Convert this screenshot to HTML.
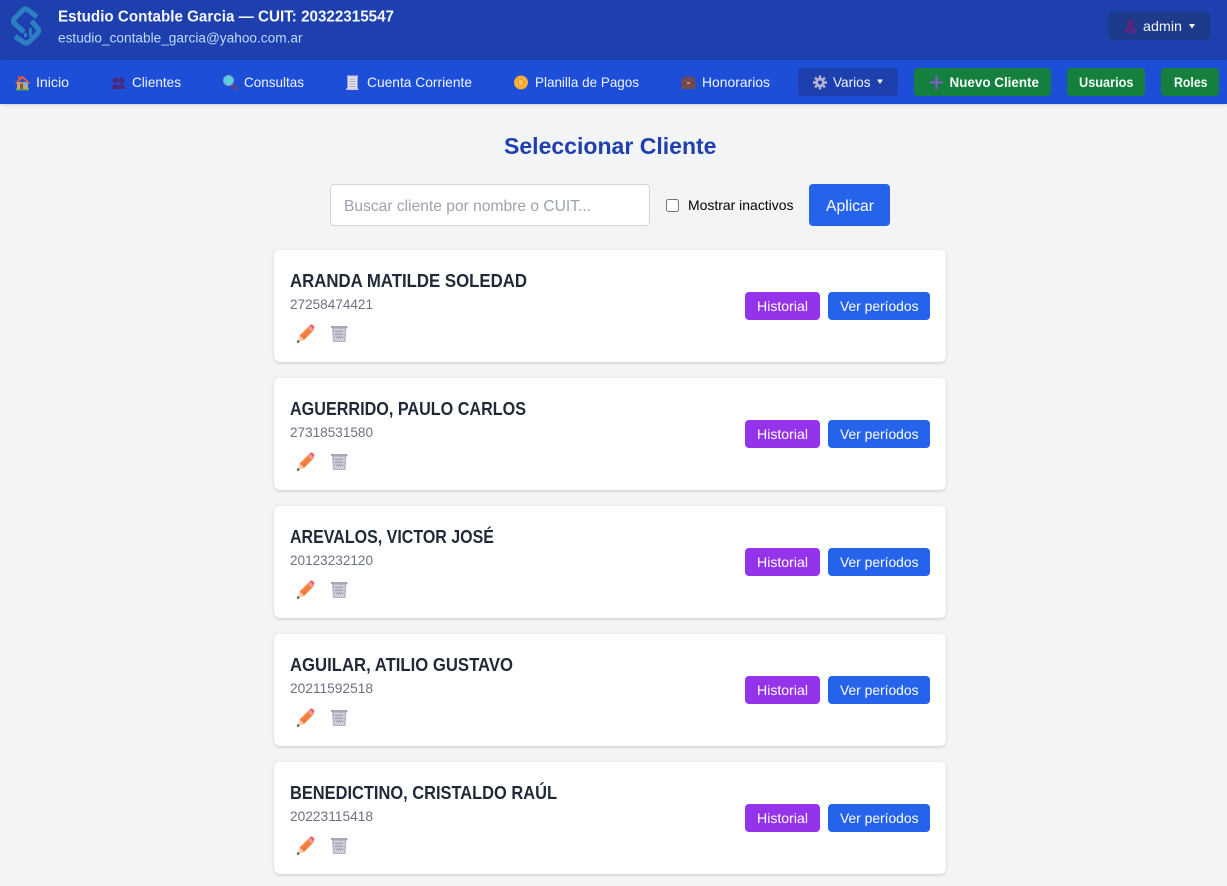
<!DOCTYPE html>
<html lang="es">
<head>
<meta charset="utf-8">
<title>Seleccionar Cliente</title>
<style>
html,body{margin:0;padding:0;background:#f3f4f6;}
body{position:relative;width:1227px;height:886px;overflow:hidden;font-family:"Liberation Sans",sans-serif;}
.b{position:absolute;box-sizing:border-box;}
.top{left:0;top:0;width:1227px;height:60px;background:#1e40af;}
.nav{left:0;top:60px;width:1227px;height:44px;background:#1d4ed8;box-shadow:0 1px 3px rgba(0,0,0,.15);}
.r{border-radius:4px;}
.g{background:#15803d;top:68px;height:28px;}
.card{left:274px;width:672px;height:112px;background:#fff;border-radius:6px;box-shadow:0 1px 3px rgba(0,0,0,.12),0 1px 2px rgba(0,0,0,.06);}
.h{left:745px;width:75px;height:28px;background:#9333ea;border-radius:4px;}
.v{left:828px;width:102px;height:28px;background:#2563eb;border-radius:4px;}
input[type=checkbox]{position:absolute;left:666px;top:199px;width:13px;height:13px;margin:0;}
svg.o{position:absolute;left:0;top:0;}
text{font-family:"Liberation Sans",sans-serif;}
.n{font-size:14px;fill:#eff4ff;}
.nm{font-size:18px;font-weight:700;fill:#1f2937;}
.c{font-size:14px;fill:#6b7280;}
.bt{font-size:14px;fill:#fff;}
</style>
</head>
<body>
<div class="b top"></div>
<div class="b nav"></div>
<div class="b r" style="left:1108px;top:12px;width:102px;height:28px;background:#1e3a8a;"></div>
<div class="b r" style="left:798px;top:68px;width:100px;height:28px;background:#1e40af;"></div>
<div class="b r g" style="left:914px;width:137px;"></div>
<div class="b r g" style="left:1067px;width:78px;"></div>
<div class="b r g" style="left:1161px;width:58px;"></div>

<div class="b" style="left:330px;top:184px;width:320px;height:42px;background:#fff;border:1px solid #d1d5db;border-radius:4px;"></div>
<div class="b r" style="left:809px;top:184px;width:81px;height:42px;background:#2563eb;"></div>
<input type="checkbox">

<div class="b card" style="top:250px"></div><div class="b h" style="top:292px"></div><div class="b v" style="top:292px"></div>
<div class="b card" style="top:378px"></div><div class="b h" style="top:420px"></div><div class="b v" style="top:420px"></div>
<div class="b card" style="top:506px"></div><div class="b h" style="top:548px"></div><div class="b v" style="top:548px"></div>
<div class="b card" style="top:634px"></div><div class="b h" style="top:676px"></div><div class="b v" style="top:676px"></div>
<div class="b card" style="top:762px"></div><div class="b h" style="top:804px"></div><div class="b v" style="top:804px"></div>

<svg class="o" width="1227" height="886" viewBox="0 0 1227 886" xmlns="http://www.w3.org/2000/svg">
<defs>
<g id="pencil">
<path d="M299.500 335.500l9.500-9.500 4.500 4.500-9.500 9.500z" fill="#f47b3a"/>
<path d="M301.500 333.500l9-9 1 1-9 9z" fill="#f89a5c"/>
<path d="M297 343l2.500-7.500 4.500 4.500z" fill="#f2cfa4"/>
<path d="M296.800 343l1-3 2 2z" fill="#3a2f33"/>
<path d="M307.500 327.500l2.500-2 4 4-2 2.500z" fill="#ee9c9c"/>
<path d="M309.800 325.500l.8-.7q1-.7 1.800 0l1.700 1.700q.7.800 0 1.800l-.7.900z" fill="#ef5a5a"/>
</g>
<g id="trash">
<path d="M331 326h16.500v2H331z" fill="#a6a6b6"/>
<path d="M332 328h14.500l-1 14h-12.500z" fill="#b6b6c4"/>
<path d="M333.800 329h11l-.8 11.800h-9.400z" fill="#d2d2dc"/>
<path d="M335 330.500l1 1.500 1-1.500 1 1.500 1-1.500 1 1.500 1-1.500 1 1.500 1-1.500M335 333.500l1 1.500 1-1.500 1 1.500 1-1.500 1 1.500 1-1.500 1 1.500 1-1.500M335.500 336.500l1 1.500 1-1.500 1 1.500 1-1.500 1 1.500 1-1.500 1 1.500 .8-1.500" fill="none" stroke="#a0a0b2" stroke-width=".8"/>
</g>
</defs>

<!-- logo -->
<g fill="none" stroke="#2b7fc3" stroke-width="5" stroke-linejoin="round" stroke-linecap="butt">
<path d="M37 17L28 10Q25.500 8 23 10L14.500 18.500Q12.300 21.500 15 24L24 32"/>
<path d="M15 36.500L24 42.500Q26.500 44 29 42L37.500 33.500Q40 30.500 37.500 28L31.500 21"/>
</g>
<path d="M24 33h3v4h-3zM29 28h2.800v9H29z" fill="#2b7fc3"/>

<text x="58" y="21.500" font-size="15.500" font-weight="700" fill="#f5f8ff" textLength="336" lengthAdjust="spacingAndGlyphs">Estudio Contable Garcia — CUIT: 20322315547</text>
<text x="58" y="42.500" font-size="13.500" fill="#bfdbfe" textLength="244.500" lengthAdjust="spacingAndGlyphs">estudio_contable_garcia@yahoo.com.ar</text>

<!-- user icon -->
<ellipse cx="1130.500" cy="24" rx="4" ry="5" fill="#4f2a80"/>
<path d="M1124 33q0-5 4-5.500h5q4 .5 4 5.500z" fill="#4f2a80"/>
<text x="1143" y="31" class="n" font-size="14" textLength="39" lengthAdjust="spacingAndGlyphs">admin</text>
<path d="M1189 24h6l-3 4.500z" fill="#eff4ff"/>

<!-- nav icons -->
<path d="M16 88h13v2.500H16z" fill="#4caf50"/>
<path d="M17 82h11v7H17z" fill="#c9a27c"/>
<path d="M20 83.500h3v5.500h-3z" fill="#8a5a3c"/>
<path d="M24.500 83h2.800v2.800h-2.800z" fill="#4fc3f7"/>
<path d="M15 83l7.500-7.500L30 83l-1.300 1-6.200-5.800L16.300 84z" fill="#e8623f"/>
<path d="M18 76h2v3h-2z" fill="#d9573a"/>
<text x="36" y="87" class="n" textLength="33" lengthAdjust="spacingAndGlyphs">Inicio</text>

<g fill="#4a2a80">
<circle cx="115.500" cy="80.500" r="3"/><path d="M111.500 89q0-5 4-5t4 5z"/>
<circle cx="121.500" cy="80.500" r="3"/><path d="M117.500 89q0-5 4-5t4 5z"/>
</g>
<text x="132" y="87" class="n" textLength="49" lengthAdjust="spacingAndGlyphs">Clientes</text>

<path d="M232 84l4.500 5" stroke="#74406f" stroke-width="2.800" stroke-linecap="round"/>
<circle cx="228.500" cy="80.500" r="5" fill="#5ccfe6" stroke="#7aa2b8" stroke-width="1"/>
<text x="244" y="87" class="n" textLength="60" lengthAdjust="spacingAndGlyphs">Consultas</text>

<path d="M347.500 76h10v13h-10z" fill="#e4e2ec"/>
<path d="M347 75.500h11v1.500h-11zM346 88.500h12.500v1.500H346z" fill="#cfc7de"/>
<path d="M349.500 79h6M349.500 81.500h6M349.500 84h6M349.500 86.500h6" stroke="#a9a5bf" stroke-width=".9"/>
<text x="367" y="87" class="n" textLength="105" lengthAdjust="spacingAndGlyphs">Cuenta Corriente</text>

<circle cx="521" cy="82.500" r="7" fill="#f6a93b"/>
<circle cx="521" cy="82.500" r="4.600" fill="#f09a22" stroke="#fbc65f" stroke-width=".8"/>
<path d="M519 80h4v5h-4z" fill="#f9c25a"/>
<text x="535" y="87" class="n" textLength="104" lengthAdjust="spacingAndGlyphs">Planilla de Pagos</text>

<path d="M686 78.500v-2h5v2" fill="none" stroke="#6f4a4e" stroke-width="1.300"/>
<rect x="681.500" y="78" width="14" height="11" rx="1" fill="#744b52"/>
<path d="M681.500 83h14" stroke="#5f3c46" stroke-width=".8"/>
<rect x="687" y="82" width="3" height="2" fill="#e08a4a"/>
<text x="702" y="87" class="n" textLength="68" lengthAdjust="spacingAndGlyphs">Honorarios</text>

<!-- gear -->
<g fill="#b7b3cf">
<circle cx="820" cy="82.500" r="4.800"/>
<path d="M818.800 75.500h2.400v14h-2.400zM813 81.300h14v2.400h-14z"/>
<path d="M814.200 78.400l1.700-1.700 9.900 9.900-1.700 1.700zM824.100 76.700l1.700 1.700-9.900 9.900-1.700-1.700z"/>
</g>
<circle cx="820" cy="82.500" r="2" fill="#1e40af"/>
<text x="833" y="87" class="n" textLength="37.500" lengthAdjust="spacingAndGlyphs">Varios</text>
<path d="M877 79.500h6l-3 4.500z" fill="#eff4ff"/>

<!-- plus -->
<path d="M935.400 75.500h2.200v13.500h-2.200zM930 81.200h13v2.200h-13z" fill="#7c5cd0"/>
<text x="949.500" y="87" font-size="14" font-weight="700" fill="#f3fbf5" textLength="89.500" lengthAdjust="spacingAndGlyphs">Nuevo Cliente</text>
<text x="1079" y="87" font-size="14" font-weight="700" fill="#f3fbf5" textLength="54.500" lengthAdjust="spacingAndGlyphs">Usuarios</text>
<text x="1174" y="87" font-size="14" font-weight="700" fill="#f3fbf5" textLength="33.500" lengthAdjust="spacingAndGlyphs">Roles</text>

<!-- heading & filter -->
<text x="504" y="154" font-size="23.500" font-weight="700" fill="#1e40af" textLength="212.500" lengthAdjust="spacingAndGlyphs">Seleccionar Cliente</text>
<text x="344" y="211" font-size="16" fill="#9ca3af" textLength="247" lengthAdjust="spacingAndGlyphs">Buscar cliente por nombre o CUIT...</text>
<text x="688" y="210" font-size="14" fill="#000" textLength="105.500" lengthAdjust="spacingAndGlyphs">Mostrar inactivos</text>
<text x="826" y="211" font-size="16" fill="#fff" textLength="48" lengthAdjust="spacingAndGlyphs">Aplicar</text>

<!-- card 1 -->
<text x="290" y="287" class="nm" textLength="237" lengthAdjust="spacingAndGlyphs">ARANDA MATILDE SOLEDAD</text>
<text x="290" y="309" class="c" textLength="83" lengthAdjust="spacingAndGlyphs">27258474421</text>
<use href="#pencil"/><use href="#trash"/>
<text x="757" y="311" class="bt" textLength="51" lengthAdjust="spacingAndGlyphs">Historial</text>
<text x="840" y="311" class="bt" textLength="78.500" lengthAdjust="spacingAndGlyphs">Ver períodos</text>

<!-- card 2 -->
<text x="290" y="415" class="nm" textLength="236" lengthAdjust="spacingAndGlyphs">AGUERRIDO, PAULO CARLOS</text>
<text x="290" y="437" class="c" textLength="83" lengthAdjust="spacingAndGlyphs">27318531580</text>
<use href="#pencil" y="128"/><use href="#trash" y="128"/>
<text x="757" y="439" class="bt" textLength="51" lengthAdjust="spacingAndGlyphs">Historial</text>
<text x="840" y="439" class="bt" textLength="78.500" lengthAdjust="spacingAndGlyphs">Ver períodos</text>

<!-- card 3 -->
<text x="290" y="543" class="nm" textLength="204" lengthAdjust="spacingAndGlyphs">AREVALOS, VICTOR JOSÉ</text>
<text x="290" y="565" class="c" textLength="83" lengthAdjust="spacingAndGlyphs">20123232120</text>
<use href="#pencil" y="256"/><use href="#trash" y="256"/>
<text x="757" y="567" class="bt" textLength="51" lengthAdjust="spacingAndGlyphs">Historial</text>
<text x="840" y="567" class="bt" textLength="78.500" lengthAdjust="spacingAndGlyphs">Ver períodos</text>

<!-- card 4 -->
<text x="290" y="671" class="nm" textLength="223" lengthAdjust="spacingAndGlyphs">AGUILAR, ATILIO GUSTAVO</text>
<text x="290" y="693" class="c" textLength="83" lengthAdjust="spacingAndGlyphs">20211592518</text>
<use href="#pencil" y="384"/><use href="#trash" y="384"/>
<text x="757" y="695" class="bt" textLength="51" lengthAdjust="spacingAndGlyphs">Historial</text>
<text x="840" y="695" class="bt" textLength="78.500" lengthAdjust="spacingAndGlyphs">Ver períodos</text>

<!-- card 5 -->
<text x="290" y="799" class="nm" textLength="267" lengthAdjust="spacingAndGlyphs">BENEDICTINO, CRISTALDO RAÚL</text>
<text x="290" y="821" class="c" textLength="83" lengthAdjust="spacingAndGlyphs">20223115418</text>
<use href="#pencil" y="512"/><use href="#trash" y="512"/>
<text x="757" y="823" class="bt" textLength="51" lengthAdjust="spacingAndGlyphs">Historial</text>
<text x="840" y="823" class="bt" textLength="78.500" lengthAdjust="spacingAndGlyphs">Ver períodos</text>
</svg>
</body>
</html>
